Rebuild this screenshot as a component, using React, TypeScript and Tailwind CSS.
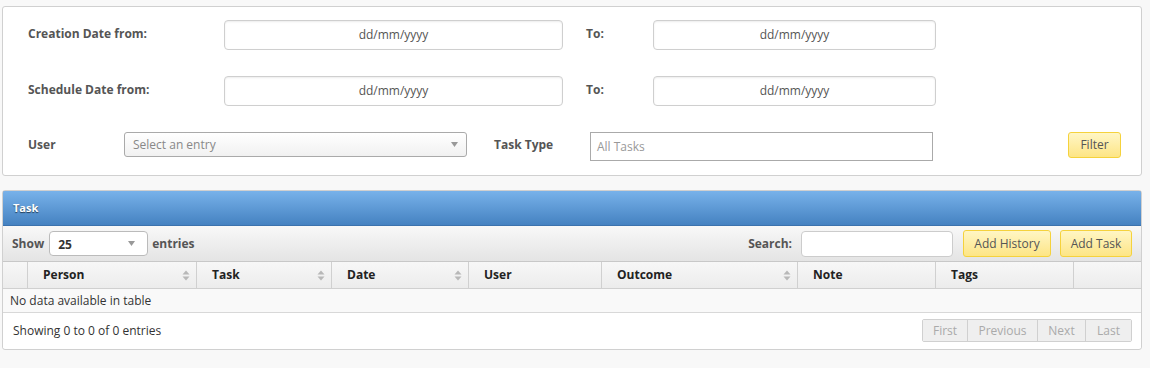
const font = { fontFamily: '"Open Sans", "Liberation Sans", sans-serif' }

function DateInput({ className }: { className: string }) {
  return (
    <div
      className={`h-[30px] rounded-[4px] border border-[#cfcfcf] bg-white shadow-[inset_0_1px_2px_rgba(0,0,0,0.08)] flex items-center justify-center text-[12px] text-[#555] ${className}`}
    >
      dd/mm/yyyy
    </div>
  )
}

function SortIcon() {
  return (
    <svg width="8" height="11" viewBox="0 0 8 11" className="shrink-0">
      <path d="M4 0.5 L7.5 4.5 L0.5 4.5 Z" fill="#b8b8b8" />
      <path d="M4 10.5 L7.5 6.5 L0.5 6.5 Z" fill="#b8b8b8" />
    </svg>
  )
}

function Caret() {
  return (
    <svg width="7" height="5" viewBox="0 0 7 5">
      <path d="M0 0 L7 0 L3.5 5 Z" fill="#999" />
    </svg>
  )
}

const columns = [
  { label: 'Person', w: 'w-[169px]', sort: true },
  { label: 'Task', w: 'w-[135px]', sort: true },
  { label: 'Date', w: 'w-[137px]', sort: true },
  { label: 'User', w: 'w-[133px]', sort: false },
  { label: 'Outcome', w: 'w-[196px]', sort: true },
  { label: 'Note', w: 'w-[138px]', sort: false },
  { label: 'Tags', w: 'w-[138px]', sort: false },
]

const pages = [
  { label: 'First', w: 'w-[45px]' },
  { label: 'Previous', w: 'w-[70px]' },
  { label: 'Next', w: 'w-[48px]' },
  { label: 'Last', w: 'w-[45px]' },
]

export default function App() {
  return (
    <div className="w-[1150px] h-[368px] bg-[#f8f8f8] pt-[6px] pl-[2px]" style={font}>
      {/* filter panel */}
      <div className="w-[1140px] h-[170px] rounded-[3px] border border-[#d0d0d0] bg-white pt-[13px] pl-[25px]">
        <div className="flex items-center h-[30px]">
          <div className="w-[196px] text-[12px] font-bold text-[#555] -mt-[2px]">Creation Date from:</div>
          <DateInput className="w-[339px]" />
          <div className="w-[67px] ml-[23px] text-[12px] font-bold text-[#555] -mt-[2px]">To:</div>
          <DateInput className="w-[283px]" />
        </div>
        <div className="flex items-center h-[30px] mt-[26px]">
          <div className="w-[196px] text-[12px] font-bold text-[#555] -mt-[2px]">Schedule Date from:</div>
          <DateInput className="w-[339px]" />
          <div className="w-[67px] ml-[23px] text-[12px] font-bold text-[#555] -mt-[2px]">To:</div>
          <DateInput className="w-[283px]" />
        </div>
        <div className="flex items-start mt-[26px]">
          <div className="w-[96px] h-[26px] flex items-center text-[12px] font-bold text-[#555]">User</div>
          <div className="w-[343px] h-[25px] rounded-[3px] border border-[#aaa] bg-gradient-to-b from-white to-[#f1f1f1] flex items-center justify-between px-[8px] text-[12px] text-[#888]">
            <span>Select an entry</span>
            <Caret />
          </div>
          <div className="w-[96px] ml-[27px] h-[26px] flex items-center text-[12px] font-bold text-[#555]">Task Type</div>
          <div className="w-[343px] h-[29px] border border-[#aaa] bg-white flex items-center px-[6px] text-[12px] text-[#999]">
            All Tasks
          </div>
          <button className="ml-[135px] w-[53px] h-[26px] rounded-[3px] border border-[#f5d23c] bg-gradient-to-b from-[#fff6c4] to-[#fde585] text-[12px] text-[#555]">
            Filter
          </button>
        </div>
      </div>

      {/* task table panel */}
      <div className="mt-[14px] w-[1140px] h-[160px] rounded-[3px] border border-[#d0d0d0] bg-white overflow-hidden">
        <div className="h-[36px] bg-gradient-to-b from-[#78b2ea] to-[#4582c1] border border-[#3b72ad] rounded-t-[3px] -m-px mb-0 flex items-center px-[10px]">
          <span className="text-[11px] font-bold text-white [text-shadow:0_1px_1px_rgba(0,0,0,0.6)]">Task</span>
        </div>
        <div className="h-[36px] bg-gradient-to-b from-[#f8f8f8] to-[#e4e4e4] border-b border-[#c8c8c8] flex items-center px-[9px]">
          <span className="text-[12px] font-bold text-[#555]">Show</span>
          <div className="ml-[5px] w-[99px] h-[25px] rounded-[4px] border border-[#bbb] bg-white flex items-center justify-between pl-[8px] pr-[12px] text-[12px] font-bold text-[#333]">
            <span className="mt-[3px]">25</span>
            <Caret />
          </div>
          <span className="ml-[4px] text-[12px] font-bold text-[#555]">entries</span>
          <span className="ml-auto text-[12px] font-bold text-[#555]">Search:</span>
          <div className="ml-[9px] w-[152px] h-[26px] rounded-[4px] border border-[#ccc] bg-white" />
          <button className="ml-[10px] w-[88px] h-[27px] rounded-[3px] border border-[#f5d23c] bg-gradient-to-b from-[#fff6c4] to-[#fde585] text-[12px] text-[#555]">
            Add History
          </button>
          <button className="ml-[9px] w-[72px] h-[27px] rounded-[3px] border border-[#f5d23c] bg-gradient-to-b from-[#fff6c4] to-[#fde585] text-[12px] text-[#555]">
            Add Task
          </button>
        </div>
        <div className="h-[27px] flex bg-gradient-to-b from-[#f7f7f7] to-[#ececec] border-b border-[#d0d0d0]">
          <div className="w-[25px] border-r border-[#d0d0d0]" />
          {columns.map((c) => (
            <div
              key={c.label}
              className={`${c.w} border-r border-[#d0d0d0] flex items-center justify-between pl-[15px] pr-[6px] text-[12px] font-bold text-[#222]`}
            >
              <span>{c.label}</span>
              {c.sort && <SortIcon />}
            </div>
          ))}
        </div>
        <div className="h-[24px] bg-[#f9f9f9] border-b border-[#d8d8d8] flex items-center px-[7px] text-[12px] text-[#333]">
          No data available in table
        </div>
        <div className="h-[35px] bg-white flex items-center pl-[10px] pr-[9px]">
          <span className="text-[12px] text-[#333]">Showing 0 to 0 of 0 entries</span>
          <div className="ml-auto flex h-[23px] rounded-[2px] border border-[#d0d0d0] overflow-hidden text-[12px] text-[#aaa]">
            {pages.map((p, i) => (
              <div
                key={p.label}
                className={`${p.w} flex items-center justify-center bg-[#efefef] ${i < pages.length - 1 ? 'border-r border-[#d0d0d0]' : ''}`}
              >
                {p.label}
              </div>
            ))}
          </div>
        </div>
      </div>
    </div>
  )
}
